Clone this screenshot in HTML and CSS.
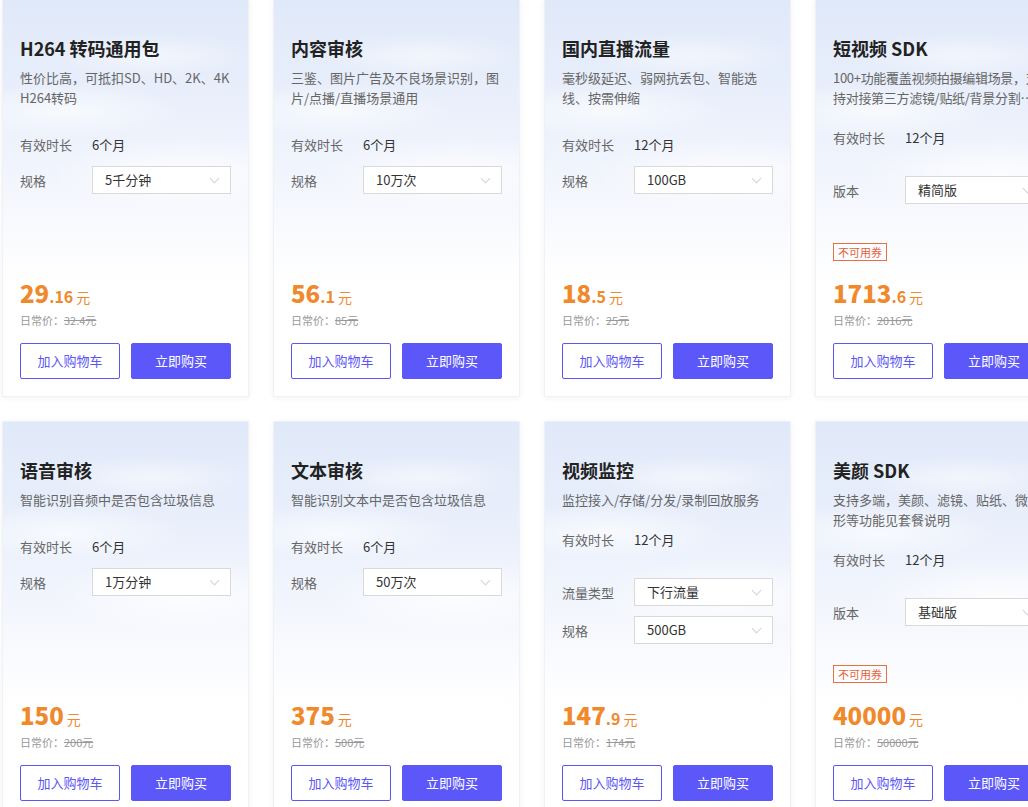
FILE: index.html
```html
<!DOCTYPE html>
<html lang="zh">
<head>
    <meta charset="UTF-8">
    <meta name="viewport" content="width=device-width, initial-scale=1.0">
    <title>云服务套餐</title>
    <link rel="stylesheet" href="styles.css">
</head>
<body>

<div class="package-list">

    <!-- 第一行 -->
    <div class="package">
        <h3>H264 转码通用包</h3>
        <p class="desc">性价比高，可抵扣SD、HD、2K、4K<br>H264转码</p>
        <div class="specs">
            <div class="spec-row time"><span class="label">有效时长</span><span>6个月</span></div>
            <div class="spec-row"><span class="label">规格</span><div class="select">5千分钟<i class="arrow"></i></div></div>
        </div>
        <div class="bottom">
            <div class="price"><b>29</b><em>.16</em><span>元</span></div>
            <div class="origin">日常价：<s>32.4元</s></div>
            <div class="buttons"><a class="btn cart">加入购物车</a><a class="btn buy">立即购买</a></div>
        </div>
    </div>

    <div class="package">
        <h3>内容审核</h3>
        <p class="desc">三鉴、图片广告及不良场景识别，图片/点播/直播场景通用</p>
        <div class="specs">
            <div class="spec-row time"><span class="label">有效时长</span><span>6个月</span></div>
            <div class="spec-row"><span class="label">规格</span><div class="select">10万次<i class="arrow"></i></div></div>
        </div>
        <div class="bottom">
            <div class="price"><b>56</b><em>.1</em><span>元</span></div>
            <div class="origin">日常价：<s>85元</s></div>
            <div class="buttons"><a class="btn cart">加入购物车</a><a class="btn buy">立即购买</a></div>
        </div>
    </div>

    <div class="package">
        <h3>国内直播流量</h3>
        <p class="desc">毫秒级延迟、弱网抗丢包、智能选线、按需伸缩</p>
        <div class="specs">
            <div class="spec-row time"><span class="label">有效时长</span><span>12个月</span></div>
            <div class="spec-row"><span class="label">规格</span><div class="select">100GB<i class="arrow"></i></div></div>
        </div>
        <div class="bottom">
            <div class="price"><b>18</b><em>.5</em><span>元</span></div>
            <div class="origin">日常价：<s>25元</s></div>
            <div class="buttons"><a class="btn cart">加入购物车</a><a class="btn buy">立即购买</a></div>
        </div>
    </div>

    <div class="package">
        <h3>短视频 SDK</h3>
        <p class="desc tight">100+功能覆盖视频拍摄编辑场景，支持对接第三方滤镜/贴纸/背景分割等功能</p>
        <div class="specs wide">
            <div class="spec-row time"><span class="label">有效时长</span><span>12个月</span></div>
            <div class="spec-row"><span class="label">版本</span><div class="select">精简版<i class="arrow"></i></div></div>
        </div>
        <div class="bottom">
            <span class="tag">不可用券</span>
            <div class="price"><b>1713</b><em>.6</em><span>元</span></div>
            <div class="origin">日常价：<s>2016元</s></div>
            <div class="buttons"><a class="btn cart">加入购物车</a><a class="btn buy">立即购买</a></div>
        </div>
    </div>

    <!-- 第二行 -->
    <div class="package">
        <h3>语音审核</h3>
        <p class="desc">智能识别音频中是否包含垃圾信息</p>
        <div class="specs">
            <div class="spec-row time"><span class="label">有效时长</span><span>6个月</span></div>
            <div class="spec-row"><span class="label">规格</span><div class="select">1万分钟<i class="arrow"></i></div></div>
        </div>
        <div class="bottom">
            <div class="price"><b>150</b><span>元</span></div>
            <div class="origin">日常价：<s>200元</s></div>
            <div class="buttons"><a class="btn cart">加入购物车</a><a class="btn buy">立即购买</a></div>
        </div>
    </div>

    <div class="package">
        <h3>文本审核</h3>
        <p class="desc">智能识别文本中是否包含垃圾信息</p>
        <div class="specs">
            <div class="spec-row time"><span class="label">有效时长</span><span>6个月</span></div>
            <div class="spec-row"><span class="label">规格</span><div class="select">50万次<i class="arrow"></i></div></div>
        </div>
        <div class="bottom">
            <div class="price"><b>375</b><span>元</span></div>
            <div class="origin">日常价：<s>500元</s></div>
            <div class="buttons"><a class="btn cart">加入购物车</a><a class="btn buy">立即购买</a></div>
        </div>
    </div>

    <div class="package">
        <h3>视频监控</h3>
        <p class="desc">监控接入/存储/分发/录制回放服务</p>
        <div class="specs wide">
            <div class="spec-row time"><span class="label">有效时长</span><span>12个月</span></div>
            <div class="spec-row"><span class="label">流量类型</span><div class="select">下行流量<i class="arrow"></i></div></div>
            <div class="spec-row"><span class="label">规格</span><div class="select">500GB<i class="arrow"></i></div></div>
        </div>
        <div class="bottom">
            <div class="price"><b>147</b><em>.9</em><span>元</span></div>
            <div class="origin">日常价：<s>174元</s></div>
            <div class="buttons"><a class="btn cart">加入购物车</a><a class="btn buy">立即购买</a></div>
        </div>
    </div>

    <div class="package">
        <h3>美颜 SDK</h3>
        <p class="desc">支持多端，美颜、滤镜、贴纸、微整形等功能见套餐说明</p>
        <div class="specs wide">
            <div class="spec-row time"><span class="label">有效时长</span><span>12个月</span></div>
            <div class="spec-row"><span class="label">版本</span><div class="select">基础版<i class="arrow"></i></div></div>
        </div>
        <div class="bottom">
            <span class="tag">不可用券</span>
            <div class="price"><b>40000</b><span>元</span></div>
            <div class="origin">日常价：<s>50000元</s></div>
            <div class="buttons"><a class="btn cart">加入购物车</a><a class="btn buy">立即购买</a></div>
        </div>
    </div>

</div>

</body>
</html>
```

FILE: styles.css
```css
body {
    font-family: "Noto Sans CJK SC", "Noto Sans", sans-serif;
    background-color: #ffffff;
    color: #333333;
    margin: 0;
    padding: 0;
    overflow: hidden;
}
.package-list {
    display: grid;
    grid-template-columns: repeat(4, 247px);
    grid-auto-rows: 398px;
    gap: 24px;
    margin: -1px 0 0 2px;
}
.package {
    display: flex;
    flex-direction: column;
    padding: 36px 17px 17px;
    box-sizing: border-box;
    border: 1px solid #f0f1f4;
    box-shadow: 0 1px 6px rgba(30, 40, 70, 0.06);
    background:
        radial-gradient(ellipse 80% 14% at 75% 44%, rgba(255, 255, 255, 0.8), rgba(255, 255, 255, 0) 70%),
        radial-gradient(ellipse 70% 10% at 25% 28%, rgba(255, 255, 255, 0.65), rgba(255, 255, 255, 0) 70%),
        radial-gradient(ellipse 60% 8% at 60% 14%, rgba(255, 255, 255, 0.5), rgba(255, 255, 255, 0) 70%),
        linear-gradient(180deg, #e0e9f9 0%, #e9effb 25%, #f2f5fd 45%, #fafbfe 60%, #ffffff 72%);
}
.package h3 {
    margin: 0;
    font-size: 18px;
    line-height: 24px;
    font-weight: bold;
    color: #222222;
}
.desc {
    margin: 8px 0 0;
    font-size: 13px;
    line-height: 20px;
    color: #666666;
    display: -webkit-box;
    -webkit-line-clamp: 2;
    -webkit-box-orient: vertical;
    overflow: hidden;
}
.desc.tight {
    letter-spacing: -0.3px;
}
.specs {
    margin-top: 22px;
    display: flex;
    flex-direction: column;
    gap: 8px;
}
.specs.wide {
    margin-top: 15px;
    gap: 10px;
}
.specs.wide .time {
    margin-bottom: 15px;
}
.spec-row {
    display: flex;
    align-items: center;
    height: 28px;
    font-size: 13px;
    color: #333333;
}
.spec-row .label {
    width: 72px;
    flex-shrink: 0;
    color: #666666;
}
.select {
    flex: 1;
    height: 28px;
    line-height: 26px;
    padding-left: 12px;
    box-sizing: border-box;
    border: 1px solid #d9d9d9;
    background-color: #ffffff;
    color: #333333;
    position: relative;
}
.arrow {
    position: absolute;
    right: 12px;
    top: 8px;
    width: 6px;
    height: 6px;
    border-right: 1px solid #cfd3da;
    border-bottom: 1px solid #cfd3da;
    transform: rotate(45deg);
}
.bottom {
    margin-top: auto;
    display: flex;
    flex-direction: column;
    align-items: flex-start;
}
.tag {
    font-size: 11px;
    line-height: 16px;
    padding: 0 4px;
    border: 1px solid #e8703f;
    color: #e5623a;
    margin-bottom: 17px;
}
.price {
    height: 30px;
    line-height: 30px;
    color: #f0892c;
    font-weight: bold;
}
.price b {
    font-size: 24px;
}
.price em {
    font-style: normal;
    font-size: 16px;
}
.price span {
    font-size: 14px;
    font-weight: normal;
    margin-left: 3px;
}
.origin {
    margin-top: 4px;
    font-size: 11px;
    line-height: 16px;
    color: #999999;
}
.origin s {
    color: #999999;
}
.buttons {
    margin-top: 15px;
    width: 100%;
    display: flex;
    justify-content: space-between;
}
.btn {
    width: 100px;
    height: 36px;
    line-height: 34px;
    box-sizing: border-box;
    text-align: center;
    font-size: 13px;
    border: 1px solid #5b56f4;
    border-radius: 2px;
    cursor: pointer;
}
.btn.cart {
    color: #5b56f4;
    background-color: #ffffff;
}
.btn.buy {
    color: #ffffff;
    background-color: #5c57f8;
    border-color: #5c57f8;
}
.btn:hover {
    opacity: 0.9;
}
```
